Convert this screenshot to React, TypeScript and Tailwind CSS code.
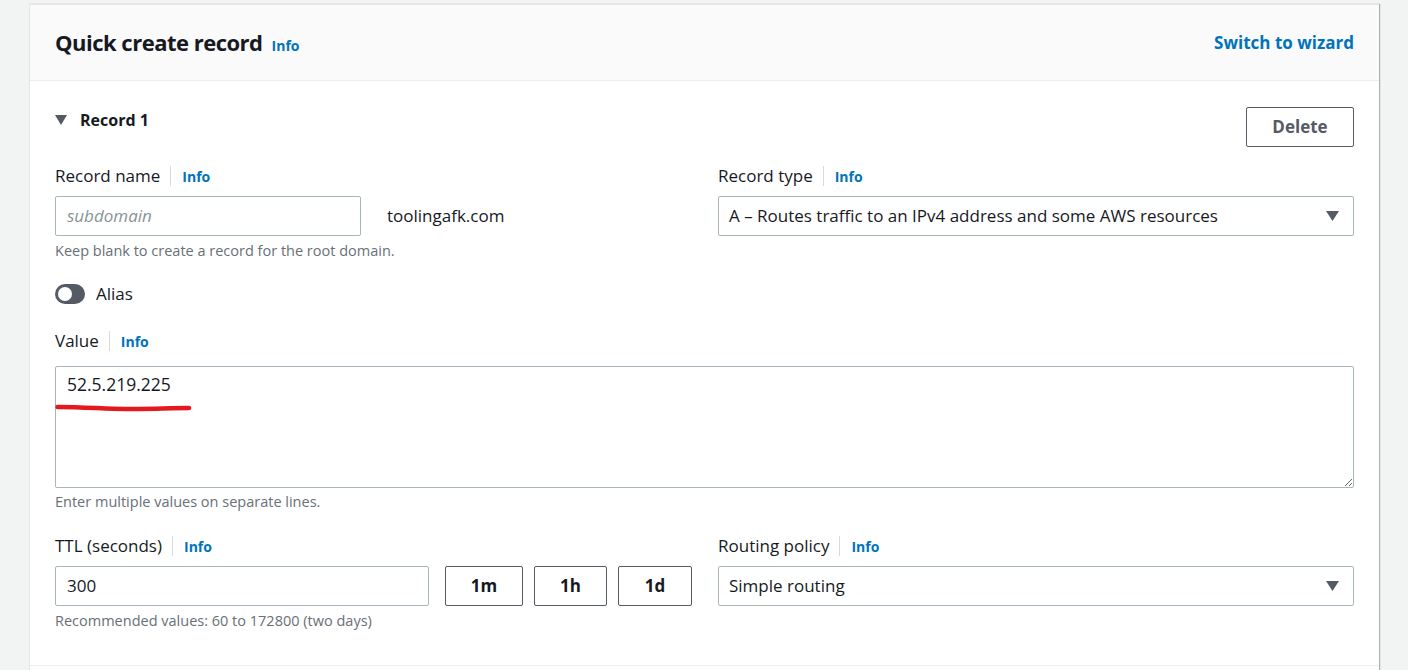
import React from "react";

function InfoLabel({ label }: { label: string }) {
  return (
    <div className="flex items-center h-[22px]">
      <span className="text-[17px] leading-[22px] text-[#16191f]">{label}</span>
      <span className="ml-[10px] mr-[11px] w-px h-[20px] bg-[#d5dbdb]" />
      <span className="text-[14px] font-bold text-[#0073bb]">Info</span>
    </div>
  );
}

function Caret({ className }: { className?: string }) {
  return (
    <svg width="13" height="10" viewBox="0 0 13 10" className={className}>
      <path d="M0 0 H13 L6.5 10 Z" fill="#545b64" />
    </svg>
  );
}

function Select({ value }: { value: string }) {
  return (
    <div className="flex items-center justify-between h-[40px] border border-[#aab7b8] rounded-[2px] bg-white pl-[10px] pr-[14px]">
      <span className="text-[17px] text-[#16191f]">{value}</span>
      <Caret />
    </div>
  );
}

function TtlButton({ label, w }: { label: string; w: string }) {
  return (
    <button
      className={`${w} shrink-0 h-[40px] border border-[#545b64] rounded-[2px] bg-white text-[17px] font-bold text-[#16191f]`}
    >
      {label}
    </button>
  );
}

export default function App() {
  return (
    <div
      className="min-h-screen bg-[#f2f3f3] pt-[4px] pl-[29px] pr-[29px] overflow-hidden"
      style={{ fontFamily: '"Open Sans", "Noto Sans", sans-serif' }}
    >
      <div className="bg-white border-l border-t border-[#e3e6e6] shadow-[1px_0_1px_0_rgba(0,28,36,0.3)] min-h-[700px]">
        {/* Header */}
        <div className="h-[76px] bg-[#fafafa] border-b border-[#eaeded] flex items-center justify-between px-[25px]">
          <div className="flex items-baseline">
            <h2 className="text-[22px] font-bold tracking-[-0.5px] text-[#16191f]">Quick create record</h2>
            <span className="ml-[9px] text-[14px] font-bold text-[#0073bb]">Info</span>
          </div>
          <a className="text-[17px] font-bold text-[#0073bb]">Switch to wizard</a>
        </div>

        {/* Record 1 */}
        <div className="px-[25px] pt-[26px] pb-[35px] border-b border-[#eaeded]">
          <div className="flex items-start justify-between h-[40px]">
            <div className="flex items-center h-[26px]">
              <svg width="12" height="10" viewBox="0 0 12 10">
                <path d="M0 0 H12 L6 10 Z" fill="#545b64" />
              </svg>
              <span className="ml-[13px] text-[16px] font-bold text-[#16191f]">Record 1</span>
            </div>
            <button className="w-[108px] h-[40px] border border-[#545b64] rounded-[2px] bg-white text-[17px] font-bold text-[#545b64]">
              Delete
            </button>
          </div>

          <div className="grid grid-cols-[637px_1fr] gap-x-[26px] mt-[18px]">
            <div>
              <InfoLabel label="Record name" />
              <div className="flex items-center mt-[9px]">
                <div className="w-[306px] h-[40px] border border-[#aab7b8] rounded-[2px] flex items-center pl-[11px]">
                  <span className="text-[17px] italic text-[#879596]">subdomain</span>
                </div>
                <span className="ml-[26px] text-[17px] text-[#16191f]">toolingafk.com</span>
              </div>
              <p className="mt-[6px] text-[14.5px] leading-[18px] text-[#687078]">
                Keep blank to create a record for the root domain.
              </p>
            </div>
            <div>
              <InfoLabel label="Record type" />
              <div className="mt-[9px]">
                <Select value="A – Routes traffic to an IPv4 address and some AWS resources" />
              </div>
            </div>
          </div>

          <div className="flex items-center mt-[23px] h-[22px]">
            <div className="w-[30px] h-[20px] rounded-full bg-[#545b64] flex items-center pl-[3px]">
              <div className="w-[14px] h-[14px] rounded-full bg-white" />
            </div>
            <span className="ml-[11px] text-[17px] text-[#16191f]">Alias</span>
          </div>

          <div className="mt-[25px]">
            <InfoLabel label="Value" />
            <div className="relative mt-[14px]">
              <textarea
                readOnly
                defaultValue="52.5.219.225"
                className="block w-full h-[122px] border border-[#aab7b8] rounded-[2px] pl-[11px] pt-[6px] text-[17.5px] leading-[22px] text-[#16191f] outline-none resize"
              />
              <svg
                className="absolute left-0 top-[37px]"
                width="140"
                height="10"
                viewBox="0 0 140 10"
              >
                <path
                  d="M2.5 4 C 30 4, 50 6, 70 6 S 120 5, 134 5"
                  stroke="#e3191e"
                  strokeWidth="4.5"
                  strokeLinecap="round"
                  fill="none"
                />
              </svg>
            </div>
            <p className="mt-[5px] text-[14.5px] leading-[18px] text-[#687078]">
              Enter multiple values on separate lines.
            </p>
          </div>

          <div className="grid grid-cols-[637px_1fr] gap-x-[26px] mt-[24px]">
            <div>
              <InfoLabel label="TTL (seconds)" />
              <div className="flex items-center gap-[11px] mt-[9px]">
                <div className="w-[374px] shrink-0 h-[40px] border border-[#aab7b8] rounded-[2px] flex items-center pl-[11px]">
                  <span className="text-[17px] text-[#16191f]">300</span>
                </div>
                <div className="ml-[5px]">
                  <TtlButton label="1m" w="w-[78px]" />
                </div>
                <TtlButton label="1h" w="w-[73px]" />
                <TtlButton label="1d" w="w-[74px]" />
              </div>
              <p className="mt-[6px] text-[14.5px] leading-[18px] text-[#687078]">
                Recommended values: 60 to 172800 (two days)
              </p>
            </div>
            <div>
              <InfoLabel label="Routing policy" />
              <div className="mt-[9px]">
                <Select value="Simple routing" />
              </div>
            </div>
          </div>
        </div>
      </div>
    </div>
  );
}
